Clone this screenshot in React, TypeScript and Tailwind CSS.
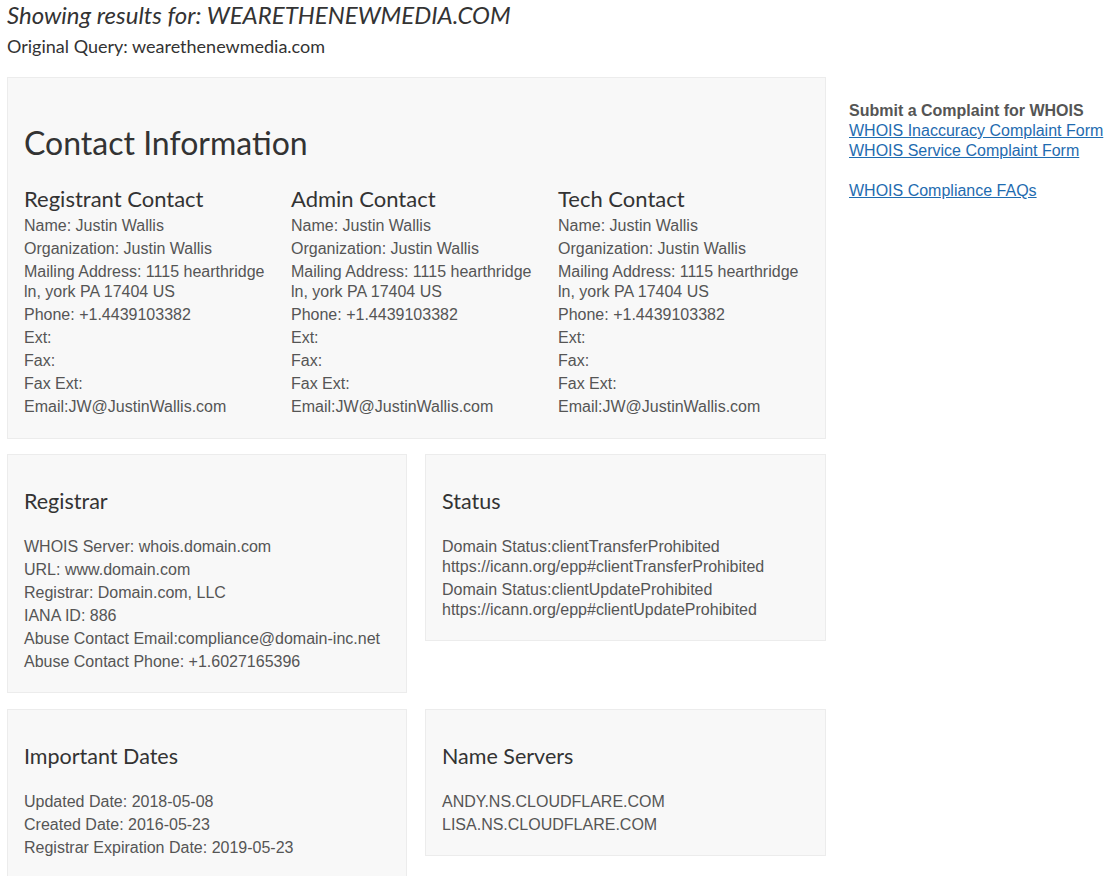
import React from "react";

const lato = "font-['Lato',sans-serif]";
const arial = "font-['Liberation_Sans',Arial,sans-serif]";

type Contact = { title: string };

const contacts: Contact[] = [
  { title: "Registrant Contact" },
  { title: "Admin Contact" },
  { title: "Tech Contact" },
];

function Line({ children }: { children: React.ReactNode }) {
  return <div className="mb-[3px] leading-5">{children}</div>;
}

function Panel({
  title,
  className = "",
  children,
}: {
  title: string;
  className?: string;
  children: React.ReactNode;
}) {
  return (
    <div
      className={`bg-[#f8f8f8] border border-[#ececec] pl-[16px] pr-4 pt-[32px] pb-[17px] ${className}`}
    >
      <h3 className={`${lato} text-[21.5px] leading-7 text-[#333] mb-[22px]`}>{title}</h3>
      <div className={`${arial} text-[16px] text-[#555]`}>{children}</div>
    </div>
  );
}

export default function App() {
  return (
    <div className="bg-white min-h-screen pl-[7px] text-[#333]">
      <h1 className={`${lato} italic text-[24px] leading-[30px] text-[#333]`}>
        Showing results for: WEARETHENEWMEDIA.COM
      </h1>
      <div className={`${lato} text-[18px] leading-[22px] mt-[5px] text-[#333]`}>
        Original Query: wearethenewmedia.com
      </div>

      <div className="flex items-start mt-[20px]">
        {/* main column */}
        <div className="w-[819px] flex flex-col">
          <div className="bg-[#f8f8f8] border border-[#ececec] pl-[16px] pt-[45px] pb-[18px]">
            <h2 className={`${lato} text-[32px] leading-10 text-[#333] mb-[22px]`}>
              Contact Information
            </h2>
            <div className="grid grid-cols-[267px_267px_267px]">
              {contacts.map((c) => (
                <div key={c.title} className="pr-[15px]">
                  <h3 className={`${lato} text-[22px] leading-7 text-[#333] mb-[3px]`}>
                    {c.title}
                  </h3>
                  <div className={`${arial} text-[16px] text-[#555]`}>
                    <Line>Name: Justin Wallis</Line>
                    <Line>Organization: Justin Wallis</Line>
                    <Line>Mailing Address: 1115 hearthridge ln, york PA 17404 US</Line>
                    <Line>Phone: +1.4439103382</Line>
                    <Line>Ext:</Line>
                    <Line>Fax:</Line>
                    <Line>Fax Ext:</Line>
                    <Line>Email:JW@JustinWallis.com</Line>
                  </div>
                </div>
              ))}
            </div>
          </div>

          <div className="flex items-start gap-[18px] mt-[15px]">
            <Panel title="Registrar" className="w-[400px]">
              <Line>WHOIS Server: whois.domain.com</Line>
              <Line>URL: www.domain.com</Line>
              <Line>Registrar: Domain.com, LLC</Line>
              <Line>IANA ID: 886</Line>
              <Line>Abuse Contact Email:compliance@domain-inc.net</Line>
              <Line>Abuse Contact Phone: +1.6027165396</Line>
            </Panel>
            <Panel title="Status" className="w-[401px]">
              <Line>
                Domain Status:clientTransferProhibited
                <br />
                https://icann.org/epp#clientTransferProhibited
              </Line>
              <Line>
                Domain Status:clientUpdateProhibited
                <br />
                https://icann.org/epp#clientUpdateProhibited
              </Line>
            </Panel>
          </div>

          <div className="flex items-start gap-[18px] mt-[16px]">
            <Panel title="Important Dates" className="w-[400px]">
              <Line>Updated Date: 2018-05-08</Line>
              <Line>Created Date: 2016-05-23</Line>
              <Line>Registrar Expiration Date: 2019-05-23</Line>
            </Panel>
            <Panel title="Name Servers" className="w-[401px]">
              <Line>ANDY.NS.CLOUDFLARE.COM</Line>
              <Line>LISA.NS.CLOUDFLARE.COM</Line>
            </Panel>
          </div>
        </div>

        {/* sidebar */}
        <aside className={`${arial} ml-[23px] pt-[24px] text-[16px] leading-5`}>
          <div className="font-bold text-[#555]">Submit a Complaint for WHOIS</div>
          <a href="#" className="block underline text-[#1f6cb0]">
            WHOIS Inaccuracy Complaint Form
          </a>
          <a href="#" className="block underline text-[#1f6cb0]">
            WHOIS Service Complaint Form
          </a>
          <a href="#" className="block underline text-[#1f6cb0] mt-5">
            WHOIS Compliance FAQs
          </a>
        </aside>
      </div>
    </div>
  );
}
